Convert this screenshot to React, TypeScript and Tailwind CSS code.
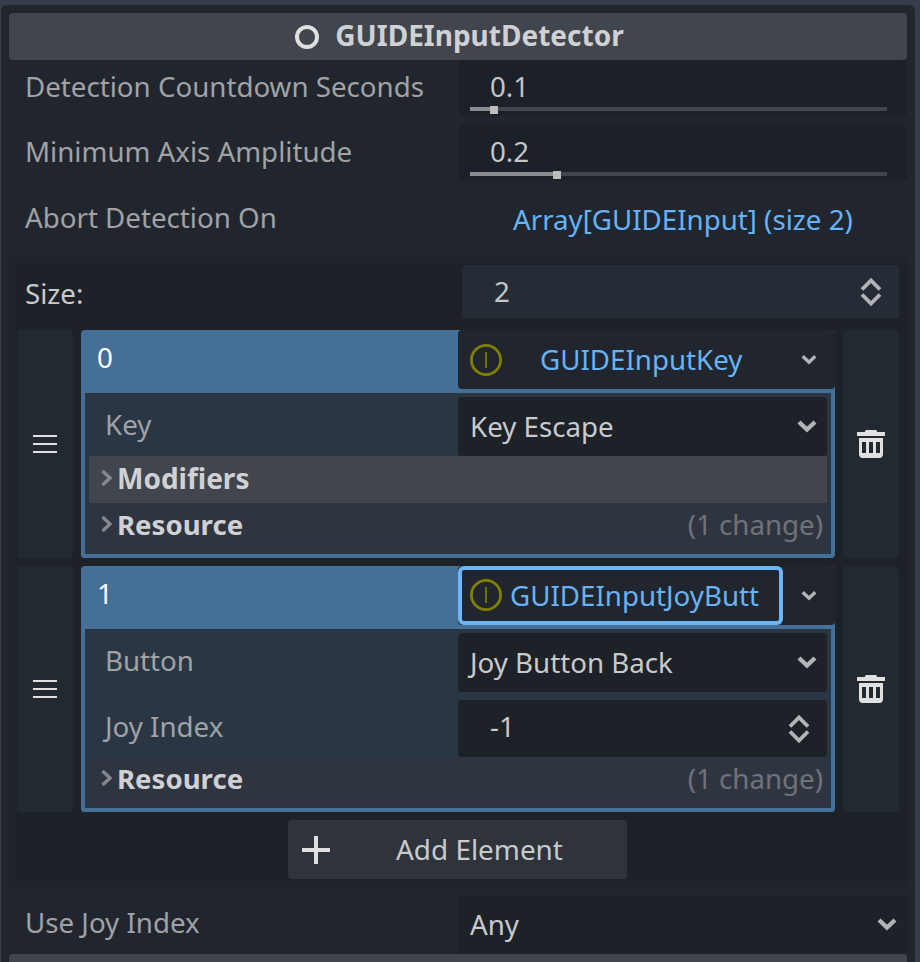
import React from 'react';

const Chevron = ({ className = '' }: { className?: string }) => (
    <svg viewBox="0 0 20 14" className={className} fill="none" stroke="currentColor" strokeWidth="4.4">
        <path d="M2 3 L10 10.5 L18 3" />
    </svg>
);

const SpinArrows = ({ className = '' }: { className?: string }) => (
    <svg viewBox="0 0 22 30" className={className} fill="none" stroke="currentColor" strokeWidth="3.8">
        <path d="M2 12.5 L11 3.5 L20 12.5" />
        <path d="M2 17.5 L11 26.5 L20 17.5" />
    </svg>
);

const WarnCircle = () => (
    <svg viewBox="0 0 32 32" className="w-8 h-8 shrink-0" fill="none" stroke="#808000">
        <circle cx="16" cy="16" r="14.6" strokeWidth="2.8" />
        <path d="M16 8 V24" strokeWidth="1.6" />
    </svg>
);

const Trash = () => (
    <svg viewBox="0 0 28 28" className="w-7 h-7" fill="#e0e0e0">
        <path d="M8 1.5 C8 .7 8.7 0 9.5 0 H18.5 C19.3 0 20 .7 20 1.5 V2 H28 V6 H0 V2 H8 Z" />
        <path d="M2 8 H26 V24.5 C26 26.4 24.4 28 22.5 28 H5.5 C3.6 28 2 26.4 2 24.5 Z M5 12 V23 H9 V12 Z M12 12 V23 H16 V12 Z M19 12 V23 H23 V12 Z" fillRule="evenodd" />
    </svg>
);

const Handle = () => (
    <svg viewBox="0 0 24 18" className="w-6 h-[18px]" fill="#e0e0e0">
        <rect x="0" y="0" width="24" height="2" />
        <rect x="0" y="8" width="24" height="2" />
        <rect x="0" y="16" width="24" height="2" />
    </svg>
);

const Arrow = () => (
    <svg viewBox="0 0 12 16" className="w-3 h-4 shrink-0" fill="none" stroke="#85888d" strokeWidth="3.4">
        <path d="M1.5 1 L9 8 L1.5 15" />
    </svg>
);

const SliderRow = ({ label, value, fill, thumb }: { label: string; value: string; fill: string; thumb: string }) => (
    <div className="flex h-14 items-stretch">
        <div className="w-[450px] pl-[16px] pt-[7px] text-[#a0a2a6]">{label}</div>
        <div className="relative flex-1 rounded bg-[#1c2028] pl-[31px] pt-[7px] text-[#c4c5c7]">
            {value}
            <div className="absolute left-[11px] top-[47px] h-1 w-[417px] bg-[#41454e]">
                <div className={`h-1 bg-[#8b8d91] ${fill}`} />
            </div>
            <div className={`absolute top-[46px] h-2 w-2 bg-[#bdbdbd] ${thumb}`} />
        </div>
    </div>
);

const ResourceRow = () => (
    <div className="flex h-[47px] items-center bg-[#2f3540] pb-[5px] pl-[12px] pr-[4px]">
        <Arrow />
        <span className="ml-[4px] text-[27.6px] font-bold text-[#d0d1d4]">Resource</span>
        <span className="ml-auto text-[#6f7379]">(1 change)</span>
    </div>
);

const ItemHead = ({ index, focused, name }: { index: string; focused: boolean; name: string }) => (
    <div className="flex h-[63px] rounded-t bg-[#466f97]">
        <div className="w-[377px] pl-[16px] pt-[8px] text-white">{index}</div>
        <div className="flex h-[59px] w-[377px] items-center rounded bg-[#21262e] text-[#66b3f5]">
            {focused ? (
                <div className="flex h-[59px] w-[325px] items-center rounded-md border-4 border-[#6cb6f7] pb-[1px] pl-[8px]">
                    <WarnCircle />
                    <span className="ml-[8px]">{name}</span>
                </div>
            ) : (
                <div className="flex w-[325px] items-center pl-[12px]">
                    <WarnCircle />
                    <span className="ml-[38px] pb-[2px]">{name}</span>
                </div>
            )}
            <Chevron className="ml-[18px] h-[11px] w-[16px] text-[#b3b4b6]" />
        </div>
    </div>
);

const FieldSelect = ({ label, value, h = 'h-[59px]', spin = false, left = 'pl-[12px]', labelTop = 'pt-[8px]', valueShift = 'pb-[2px]' }: { label: string; value: string; h?: string; spin?: boolean; left?: string; labelTop?: string; valueShift?: string }) => (
    <div className={`flex ${h}`}>
        <div className={`w-[369px] pl-[16px] text-[#a0a2a6] ${labelTop}`}>{label}</div>
        <div className={`flex flex-1 items-center rounded bg-[#1d2128] pr-[10px] text-[#c9cacc] ${left}`}>
            <span className={valueShift}>{value}</span>
            {spin ? (
                <SpinArrows className="ml-auto mr-[7px] h-[30px] w-[22px] text-[#b3b4b6]" />
            ) : (
                <Chevron className="ml-auto mb-[2px] h-[14px] w-[20px] text-[#b3b4b6]" />
            )}
        </div>
    </div>
);

export default function App() {
    return (
        <div className="flex h-[962px] w-[920px] overflow-hidden bg-[#363d4a] pt-[5px] font-['Noto_Sans',sans-serif] text-[27.7px] leading-[38px]">
            <div className="ml-px flex w-[914px] flex-col rounded-t-md bg-[#21262e] px-2 pt-2">
                <div className="flex h-[47px] shrink-0 items-center justify-center rounded bg-[#41454e] pb-[4px] pl-[3px] text-[28px] font-bold text-[#d0d1d4]">
                    <svg viewBox="0 0 24 24" className="mr-[16px] mt-[4px] h-6 w-6" fill="none" stroke="#e0e0e0" strokeWidth="4">
                        <circle cx="12" cy="12" r="10" />
                    </svg>
                    GUIDEInputDetector
                </div>

                <SliderRow label="Detection Countdown Seconds" value="0.1" fill="w-[24px]" thumb="left-[31px]" />
                <div className="h-[9px] shrink-0" />
                <SliderRow label="Minimum Axis Amplitude" value="0.2" fill="w-[87px]" thumb="left-[94px]" />

                <div className="flex h-[76px] shrink-0 pt-[17px]">
                    <div className="w-[450px] pl-[16px] text-[#a0a2a6]">Abort Detection On</div>
                    <div className="flex-1 pl-[54px] pt-[2px] text-[#66b3f5]">Array[GUIDEInput] (size 2)</div>
                </div>

                {/* Array editor */}
                <div className="flex h-[630px] shrink-0 flex-col rounded bg-[#1d2128] p-2">
                    <div className="flex h-[53px] shrink-0">
                        <div className="w-[445px] pl-[8px] pt-[9px] text-[#c9cacc]">Size:</div>
                        <div className="flex flex-1 items-center rounded-t bg-[#262c35] pl-[32px] pr-[17px] text-[#c4c5c7]">
                            <span className="pb-[2px]">2</span>
                            <SpinArrows className="ml-auto h-[30px] w-[22px] text-[#b3b4b6]" />
                        </div>
                    </div>

                    {/* Item 0 */}
                    <div className="mt-3 flex h-[228px] shrink-0 gap-2">
                        <div className="flex w-14 items-center justify-center rounded bg-[#232931]"><Handle /></div>
                        <div className="flex w-[754px] flex-col">
                            <ItemHead index="0" focused={false} name="GUIDEInputKey" />
                            <div className="flex-1 rounded-b border-x-4 border-b-4 border-[#466f97] bg-[#2a3644] p-1">
                                <FieldSelect label="Key" value="Key Escape" />
                                <div className="flex h-[47px] items-center bg-[#41454e] pb-[4px] pl-[12px]">
                                    <Arrow />
                                    <span className="ml-[4px] text-[28px] font-bold text-[#d0d1d4]">Modifiers</span>
                                </div>
                                <ResourceRow />
                            </div>
                        </div>
                        <div className="flex w-14 items-center justify-center rounded bg-[#232931]"><Trash /></div>
                    </div>

                    {/* Item 1 */}
                    <div className="mt-2 flex h-[246px] shrink-0 gap-2">
                        <div className="flex w-14 items-center justify-center rounded bg-[#232931]"><Handle /></div>
                        <div className="flex w-[754px] flex-col">
                            <ItemHead index="1" focused={true} name="GUIDEInputJoyButt" />
                            <div className="flex-1 rounded-b border-x-4 border-b-4 border-[#466f97] bg-[#2a3644] p-1">
                                <FieldSelect label="Button" value="Joy Button Back" />
                                <div className="h-2" />
                                <FieldSelect label="Joy Index" value="-1" h="h-[57px]" spin={true} left="pl-[32px]" labelTop="pt-[7px]" valueShift="pb-[6px]" />
                                <ResourceRow />
                            </div>
                        </div>
                        <div className="flex w-14 items-center justify-center rounded bg-[#232931]"><Trash /></div>
                    </div>

                    <div className="ml-[271px] mt-2 flex h-[59px] w-[339px] shrink-0 items-center rounded bg-[#2f333b] pl-[14px] text-[#c9cacc]">
                        <svg viewBox="0 0 28 28" className="h-7 w-7" fill="#e0e0e0">
                            <rect x="12" y="0" width="4" height="28" />
                            <rect x="0" y="12" width="28" height="4" />
                        </svg>
                        <span className="ml-[66px] pb-[2px] text-[27.9px]">Add Element</span>
                    </div>
                </div>

                <div className="flex h-[67px] shrink-0 pt-2">
                    <div className="w-[449px] pl-[16px] pt-[8px] text-[#a0a2a6]">Use Joy Index</div>
                    <div className="flex h-[58px] flex-1 items-center rounded bg-[#1d2128] pl-[12px] pr-[10px] text-[#c9cacc]">
                        Any
                        <Chevron className="ml-auto h-[14px] w-[20px] text-[#b3b4b6]" />
                    </div>
                </div>
                <div className="flex-1 rounded-t bg-[#41454e]" />
            </div>
        </div>
    );
}
